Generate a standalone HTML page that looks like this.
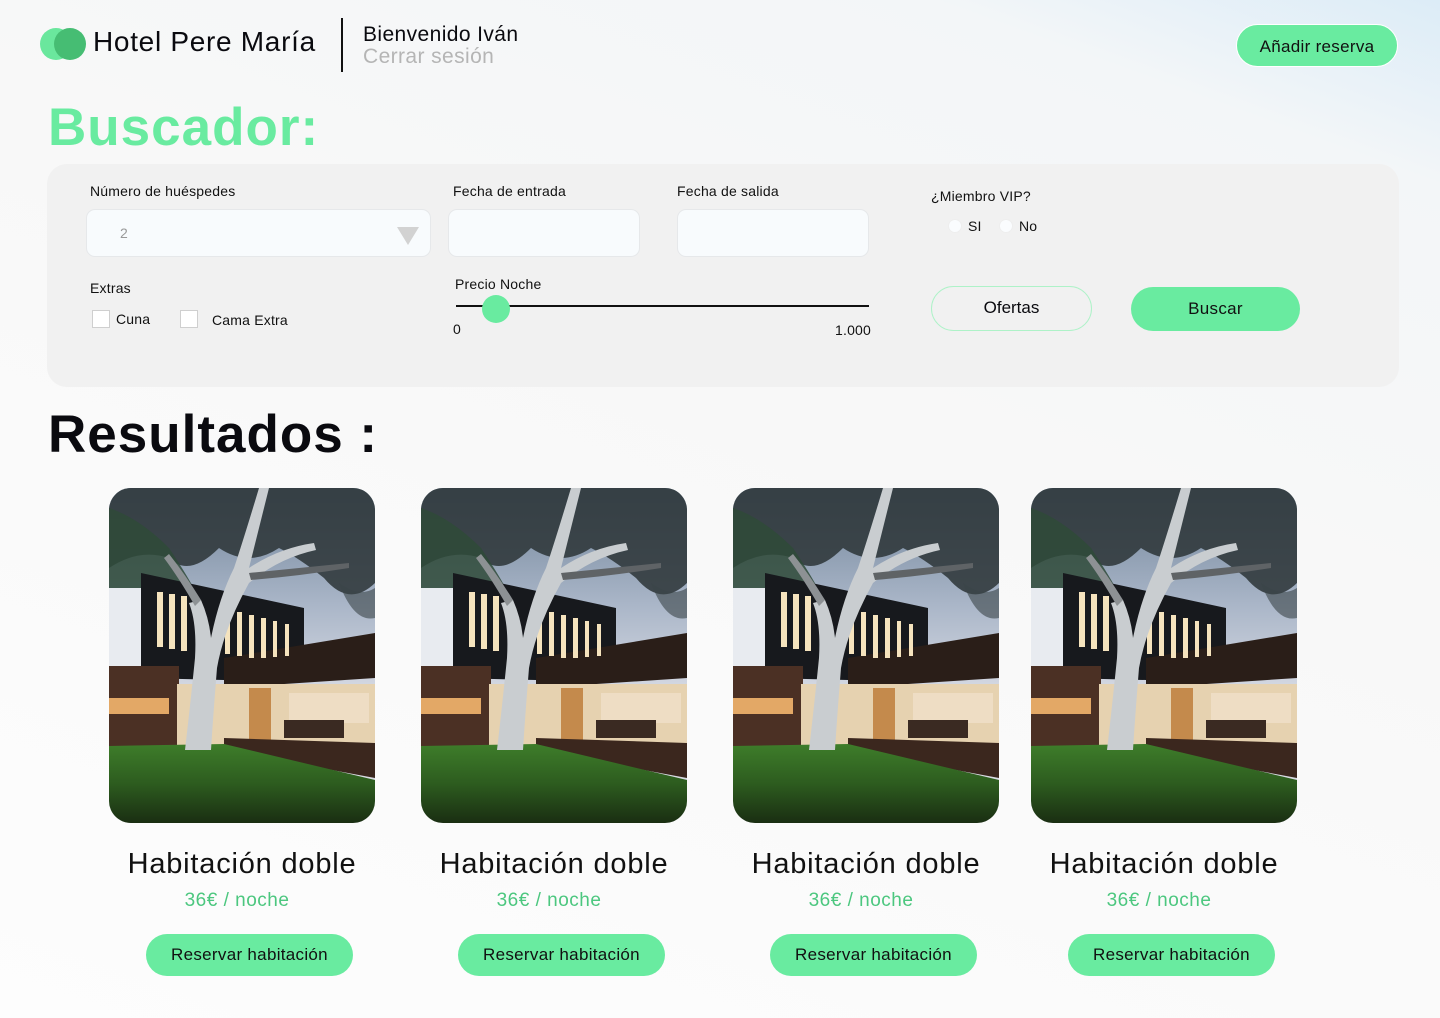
<!DOCTYPE html>
<html><head><meta charset="utf-8"><style>
*{margin:0;padding:0;box-sizing:border-box}
body{width:1440px;height:1018px;overflow:hidden;position:relative;font-family:"Liberation Sans",sans-serif;background:linear-gradient(200deg,#dcecf7 0%,#f3f6f8 12%,#f8f8f8 40%,#fdfdfd 100%);color:#0a0a0f}
.a{position:absolute}
.btn{position:absolute;background:#69eba0;border-radius:22px;text-align:center;color:#111;font-size:17px;letter-spacing:.3px}
.lbl{position:absolute;font-size:14px;color:#111;letter-spacing:.2px}
.inp{position:absolute;background:#f8fbfd;border:1px solid #e6e8ea;border-radius:9px}
.img{position:absolute;top:488px;width:266px;height:335px;border-radius:22px;overflow:hidden}
.t{position:absolute;top:848px;font-size:29px;letter-spacing:.8px;color:#111;text-align:center;width:300px}
.p{position:absolute;top:890px;font-size:19px;color:#4cc77f;text-align:center;width:200px;letter-spacing:.5px}
.cb{position:absolute;width:18px;height:18px;border:1px solid #cfcfcf;background:#fff}
.rd{position:absolute;width:14px;height:14px;border-radius:50%;background:#fafcfe;border:1px solid #eee}
</style></head><body>
<svg width="0" height="0" style="position:absolute"><defs>
<linearGradient id="s" x1="0" y1="0" x2="0" y2="1"><stop offset="0" stop-color="#6f8399"/><stop offset=".35" stop-color="#aab6c8"/><stop offset=".6" stop-color="#d4d8e2"/><stop offset="1" stop-color="#dcdde4"/></linearGradient>
<linearGradient id="g" x1="0" y1="0" x2="0" y2="1"><stop offset="0" stop-color="#3e7d2a"/><stop offset=".5" stop-color="#2d5c1f"/><stop offset="1" stop-color="#1a2e12"/></linearGradient>
<g id="house">
<rect width="266" height="335" fill="url(#s)"/>
<path d="M0 0H266V95Q240 120 215 90Q190 70 170 60Q140 80 110 60Q80 90 60 70Q30 60 0 80Z" fill="#2c3436" opacity=".85"/>
<path d="M0 20Q30 30 60 60Q80 90 90 110L90 140Q40 120 0 120Z" fill="#2f4a38" opacity=".85"/>
<path d="M230 95Q250 110 266 100V130Q245 135 230 95Z" fill="#3a4448" opacity=".6"/>
<rect x="0" y="100" width="34" height="80" fill="#e8ebf0"/>
<path d="M32 85L195 120V170L115 178V192L32 190Z" fill="#17191d"/>
<path d="M115 170L266 145V190L115 200Z" fill="#2a1e18"/>
<g fill="#f5e3bd"><rect x="48" y="104" width="6" height="55"/><rect x="60" y="106" width="6" height="55"/><rect x="72" y="108" width="6" height="55"/><rect x="116" y="122" width="5" height="44"/><rect x="128" y="124" width="5" height="44"/><rect x="140" y="127" width="5" height="43"/><rect x="152" y="130" width="5" height="40"/><rect x="164" y="133" width="4" height="36"/><rect x="176" y="136" width="4" height="32"/></g>
<rect x="0" y="178" width="70" height="82" fill="#4b3024"/>
<rect x="0" y="210" width="60" height="16" fill="#e3a866"/>
<rect x="68" y="196" width="198" height="62" fill="#e6d2b0"/>
<rect x="140" y="200" width="22" height="58" fill="#c48a4c"/>
<rect x="180" y="205" width="80" height="30" fill="#eeddc4"/>
<g fill="#3a2a22"><rect x="175" y="232" width="60" height="18"/></g>
<path d="M115 250L266 255V290L115 262Z" fill="#3b271e"/>
<path d="M0 258L115 256L266 292V335H0Z" fill="url(#g)"/>
<path d="M76 262Q82 210 86 170Q88 135 80 115L92 112Q100 130 102 150Q110 110 125 80Q135 50 150 0H160Q150 40 140 80Q170 60 205 55L207 62Q170 70 140 95Q115 140 108 180Q104 230 102 262Z" fill="#c9cdd0"/>
<path d="M86 118Q70 90 55 70L60 66Q76 86 92 112Z" fill="#8d9194"/>
<path d="M140 85Q190 80 240 75L240 80Q190 88 142 92Z" fill="#5f6366"/>
</g></defs></svg>
<div class="a" style="left:40px;top:28px;width:32px;height:32px;border-radius:50%;background:#6ae79d"></div>
<div class="a" style="left:54px;top:28px;width:32px;height:32px;border-radius:50%;background:#46bd73"></div>
<div class="a" style="left:93px;top:26px;font-size:28px;letter-spacing:.7px">Hotel Pere María</div>
<div class="a" style="left:341px;top:18px;width:1.5px;height:54px;background:#111"></div>
<div class="a" style="left:363px;top:23px;font-size:21px;letter-spacing:.4px">Bienvenido Iván</div>
<div class="a" style="left:363px;top:45px;font-size:21px;color:#b5b5b5;letter-spacing:.4px">Cerrar sesión</div>
<div class="btn" style="left:1236px;top:24px;width:162px;height:43px;line-height:43px;border:1px solid #fff">Añadir reserva</div>
<div class="a" style="left:48px;top:97px;font-size:53px;font-weight:bold;color:#69eba0;letter-spacing:1px">Buscador:</div>
<div class="a" style="left:47px;top:164px;width:1352px;height:223px;border-radius:20px;background:#f1f1f1"></div>
<div class="lbl" style="left:90px;top:183px">Número de huéspedes</div>
<div class="inp" style="left:86px;top:209px;width:345px;height:48px"></div>
<div class="a" style="left:120px;top:225px;font-size:14px;color:#999">2</div>
<div class="a" style="left:397px;top:227px;width:0;height:0;border-left:11px solid transparent;border-right:11px solid transparent;border-top:18px solid #d2d2d2"></div>
<div class="lbl" style="left:453px;top:183px">Fecha de entrada</div>
<div class="inp" style="left:448px;top:209px;width:192px;height:48px"></div>
<div class="lbl" style="left:677px;top:183px">Fecha de salida</div>
<div class="inp" style="left:677px;top:209px;width:192px;height:48px"></div>
<div class="lbl" style="left:931px;top:188px">¿Miembro VIP?</div>
<div class="rd" style="left:948px;top:219px"></div><div class="lbl" style="left:968px;top:218px">SI</div>
<div class="rd" style="left:999px;top:219px"></div><div class="lbl" style="left:1019px;top:218px">No</div>
<div class="lbl" style="left:90px;top:280px">Extras</div>
<div class="cb" style="left:92px;top:310px"></div><div class="lbl" style="left:116px;top:311px">Cuna</div>
<div class="cb" style="left:180px;top:310px"></div><div class="lbl" style="left:212px;top:312px">Cama Extra</div>
<div class="lbl" style="left:455px;top:276px">Precio Noche</div>
<div class="a" style="left:456px;top:305px;width:413px;height:1.5px;background:#111"></div>
<div class="a" style="left:482px;top:295px;width:28px;height:28px;border-radius:50%;background:#69eba0"></div>
<div class="lbl" style="left:453px;top:321px">0</div>
<div class="lbl" style="left:835px;top:322px">1.000</div>
<div class="a" style="left:931px;top:286px;width:161px;height:45px;border:1.5px solid #aef2c8;border-radius:23px;text-align:center;line-height:42px;font-size:17px">Ofertas</div>
<div class="btn" style="left:1131px;top:287px;width:169px;height:44px;line-height:44px">Buscar</div>
<div class="a" style="left:48px;top:404px;font-size:53px;font-weight:bold;letter-spacing:1px">Resultados :</div>

<div class="img" style="left:109px"><svg width="266" height="335"><use href="#house"/></svg></div>
<div class="img" style="left:421px"><svg width="266" height="335"><use href="#house"/></svg></div>
<div class="img" style="left:733px"><svg width="266" height="335"><use href="#house"/></svg></div>
<div class="img" style="left:1031px"><svg width="266" height="335"><use href="#house"/></svg></div>

<div class="t" style="left:92px">Habitación doble</div>
<div class="t" style="left:404px">Habitación doble</div>
<div class="t" style="left:716px">Habitación doble</div>
<div class="t" style="left:1014px">Habitación doble</div>
<div class="p" style="left:137px">36€ / noche</div>
<div class="p" style="left:449px">36€ / noche</div>
<div class="p" style="left:761px">36€ / noche</div>
<div class="p" style="left:1059px">36€ / noche</div>
<div class="btn" style="left:146px;top:934px;width:207px;height:42px;line-height:42px">Reservar habitación</div>
<div class="btn" style="left:458px;top:934px;width:207px;height:42px;line-height:42px">Reservar habitación</div>
<div class="btn" style="left:770px;top:934px;width:207px;height:42px;line-height:42px">Reservar habitación</div>
<div class="btn" style="left:1068px;top:934px;width:207px;height:42px;line-height:42px">Reservar habitación</div>
</body></html>
